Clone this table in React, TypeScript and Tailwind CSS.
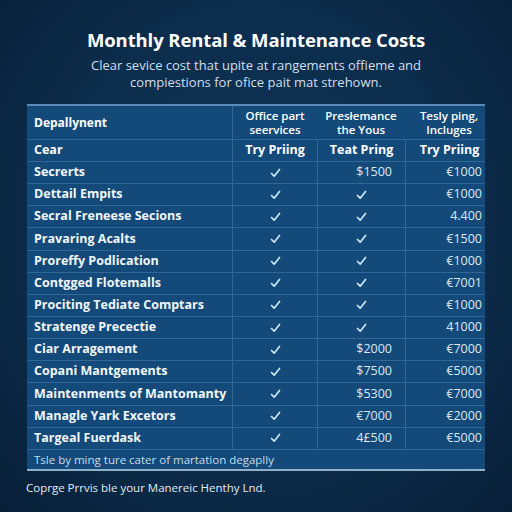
import React from "react";

const rows: { label: string; c2: string; c3: string; c4: string }[] = [
  { label: "Secrerts", c2: "check", c3: "$1500", c4: "€1000" },
  { label: "Dettail Empits", c2: "check", c3: "check", c4: "€1000" },
  { label: "Secral Freneese Secions", c2: "check", c3: "check", c4: "4.400" },
  { label: "Pravaring Acalts", c2: "check", c3: "check", c4: "€1500" },
  { label: "Proreffy Podlication", c2: "check", c3: "check", c4: "€1000" },
  { label: "Contgged Flotemalls", c2: "check", c3: "check", c4: "€7001" },
  { label: "Prociting Tediate Comptars", c2: "check", c3: "check", c4: "€1000" },
  { label: "Stratenge Precectie", c2: "check", c3: "check", c4: "41000" },
  { label: "Ciar Arragement", c2: "check", c3: "$2000", c4: "€7000" },
  { label: "Copani Mantgements", c2: "check", c3: "$7500", c4: "€5000" },
  { label: "Maintenments of Mantomanty", c2: "check", c3: "$5300", c4: "€7000" },
  { label: "Managle Yark Excetors", c2: "check", c3: "€7000", c4: "€2000" },
  { label: "Targeal Fuerdask", c2: "check", c3: "4£500", c4: "€5000" },
];

function Check() {
  return (
    <svg width="11" height="10" viewBox="0 0 11 10" fill="none">
      <path d="M1.5 5.5 L4.2 8.2 L9.5 1.5" stroke="#cde9f7" strokeWidth="1.7" strokeLinecap="round" strokeLinejoin="round" />
    </svg>
  );
}

function Cell({ v, last }: { v: string; last?: boolean }) {
  if (v === "check") {
    return (
      <div className="flex items-center justify-center border-l border-[#2f6796]">
        <Check />
      </div>
    );
  }
  return (
    <div className={`flex items-center justify-end border-l border-[#2f6796] text-[12.5px] text-[#dbe8f3] ${last ? "pr-[11px]" : "pr-[13px]"}`}>
      {v}
    </div>
  );
}

export default function App() {
  return (
    <div
      className="w-[512px] h-[512px] overflow-hidden flex flex-col bg-[radial-gradient(ellipse_at_50%_45%,#0f3558_0%,#0c2d4c_55%,#081f38_100%)]"
      style={{ fontFamily: "'Open Sans', Lato, sans-serif" }}
    >
      <div className="pt-[28px] text-center text-white font-bold text-[18.5px] leading-[24px] tracking-[-0.1px]">
        Monthly Rental &amp; Maintenance Costs
      </div>
      <div className="mt-[5px] text-center text-[#d3dfea] text-[13px] leading-[17px]">
        Clear sevice cost that upite at rangements offieme and
        <br />
        compiestions for ofice pait mat strehown.
      </div>
      <div className="mt-[13px] mx-[27px] bg-[#134a7a] border-t-2 border-[#5a8cb6] border-b-2 border-b-[#8eb0c9]">
        <div className="grid grid-cols-[205px_85px_88px_88px] h-[33px]">
          <div className="flex items-center pl-[7px] text-[12px] font-bold text-white">Depallynent</div>
          <div className="flex flex-col items-center justify-center border-l border-[#2f6796] text-[11.5px] leading-[14px] font-semibold text-white text-center">
            <span>Office part</span>
            <span>seervices</span>
          </div>
          <div className="flex flex-col items-center justify-center text-[11.5px] leading-[14px] font-semibold text-white text-center">
            <span>Presłemance</span>
            <span>the Yous</span>
          </div>
          <div className="flex flex-col items-center justify-center text-[11.5px] leading-[14px] font-semibold text-white text-center">
            <span>Tesly ping,</span>
            <span>Incluges</span>
          </div>
        </div>
        <div className="grid grid-cols-[205px_85px_88px_88px] h-[22px] border-t border-[#2f6796] text-[12.5px] font-bold text-white">
          <div className="flex items-center pl-[7px]">Cear</div>
          <div className="flex items-center justify-center border-l border-[#2f6796]">Try Priing</div>
          <div className="flex items-center justify-center border-l border-[#2f6796]">Teat Pring</div>
          <div className="flex items-center justify-center border-l border-[#2f6796]">Try Priing</div>
        </div>
        {rows.map((r, i) => (
          <div key={i} className="grid grid-cols-[205px_85px_88px_88px] h-[22.15px] border-t border-[#2f6796]">
            <div className="flex items-center pl-[7px] text-[12.5px] font-bold text-[#f2f7fb] whitespace-nowrap">{r.label}</div>
            <Cell v={r.c2} />
            <Cell v={r.c3} />
            <Cell v={r.c4} last />
          </div>
        ))}
        <div className="h-[20px] border-t border-[#2f6796] flex items-center pl-[7px] text-[11.5px] text-[#c9dbea]">
          Tsle by ming ture cater of martation degaplly
        </div>
      </div>
      <div className="mt-[8px] pl-[26px] text-[11.5px] text-[#e3ecf4]">
        Coprge Prrvis ble your Manereic Henthy Lnd.
      </div>
    </div>
  );
}
